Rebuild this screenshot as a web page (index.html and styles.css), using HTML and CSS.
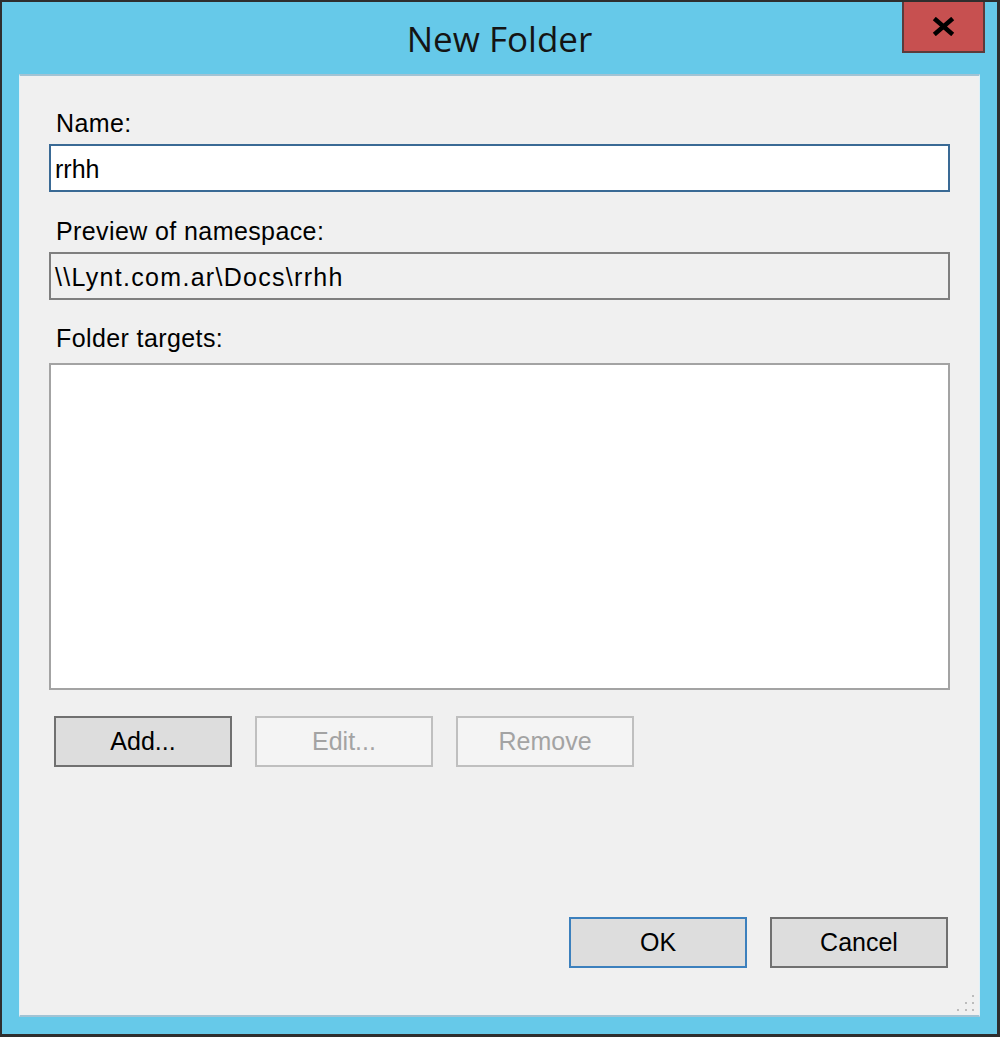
FILE: index.html
```html
<!DOCTYPE html>
<html lang="en">
<head>
    <meta charset="UTF-8">
    <title>New Folder</title>
    <link rel="stylesheet" href="styles.css">
</head>
<body>
    <div class="window">
        <div class="titlebar">
            <span class="title">New Folder</span>
            <button class="close-btn" aria-label="Close">
                <svg width="23" height="19" viewBox="0 0 23 19">
                    <path d="M4 3 L19 16 M19 3 L4 16" stroke="#000" stroke-width="4.5" stroke-linecap="square" fill="none"/>
                </svg>
            </button>
        </div>

        <div class="client">
            <label class="field-label" for="name-input">Name:</label>
            <input id="name-input" class="textbox" type="text" value="rrhh">

            <div class="field-label">Preview of namespace:</div>
            <div class="textbox readonly">\\Lynt.com.ar\Docs\rrhh</div>

            <div class="field-label targets-label">Folder targets:</div>
            <div class="listbox"></div>

            <div class="target-actions">
                <button class="btn btn-dark">Add...</button>
                <button class="btn" disabled>Edit...</button>
                <button class="btn" disabled>Remove</button>
            </div>

            <div class="dialog-actions">
                <button class="btn btn-default">OK</button>
                <button class="btn btn-dark">Cancel</button>
            </div>

            <!-- resize grip -->
            <svg class="grip" width="20" height="20" viewBox="0 0 20 20">
                <rect x="16" y="2" width="2" height="2" fill="#bcbcbc"/>
                <rect x="9" y="9" width="2" height="2" fill="#bcbcbc"/>
                <rect x="16" y="9" width="2" height="2" fill="#bcbcbc"/>
                <rect x="1" y="16" width="2" height="2" fill="#bcbcbc"/>
                <rect x="9" y="16" width="2" height="2" fill="#bcbcbc"/>
                <rect x="16" y="16" width="2" height="2" fill="#bcbcbc"/>
            </svg>
        </div>
    </div>
</body>
</html>
```

FILE: styles.css
```css
* {
    box-sizing: border-box;
}

html, body {
    margin: 0;
    padding: 0;
}

body {
    font-family: "Liberation Sans", Arial, sans-serif;
    background-color: #2e2e2e;
}

.window {
    position: relative;
    width: 1000px;
    height: 1037px;
    display: flex;
    flex-direction: column;
    background-color: #66c9e9;
    border-style: solid;
    border-color: #2e2e2e;
    border-width: 2px 3px 3px 2px;
}

.titlebar {
    flex: none;
    height: 72px;
    padding-top: 19px;
    text-align: center;
}

.title {
    font-family: "Open Sans", "Noto Sans", sans-serif;
    font-size: 35px;
    line-height: 35px;
    color: #141414;
}

.close-btn {
    position: absolute;
    top: 0;
    right: 12px;
    width: 83px;
    height: 51px;
    padding: 0;
    display: flex;
    align-items: center;
    justify-content: center;
    background-color: #c75050;
    border: 2px solid #5b3b3b;
    border-top: none;
}

.client {
    position: relative;
    flex: 1;
    display: flex;
    flex-direction: column;
    margin: 0 17px 17px 17px;
    padding: 32px 29px 47px 29px;
    background-color: #f0f0f0;
    border-style: solid;
    border-color: #a2c3d4;
    border-width: 2px 1px 2px 1px;
    border-left-color: #dff1f8;
    border-right-color: #dff1f8;
}

.field-label {
    display: block;
    font-size: 25px;
    line-height: 30px;
    letter-spacing: 0.4px;
    padding-left: 7px;
    margin-bottom: 6px;
    color: #000;
}

.targets-label {
    margin-bottom: 10px;
}

.textbox {
    width: 100%;
    height: 48px;
    margin: 0 0 24px 0;
    padding: 2px 4px 0 4px;
    font-family: "Liberation Sans", Arial, sans-serif;
    font-size: 25px;
    line-height: 42px;
    color: #000;
    background-color: #fff;
    border: 2px solid #3a6a95;
    outline: none;
}

.readonly {
    background-color: #f0f0f0;
    border-color: #7f7f7f;
    letter-spacing: 1.3px;
    margin-bottom: 23px;
}

.listbox {
    height: 327px;
    background-color: #fff;
    border: 2px solid #a3a3a3;
}

.target-actions {
    display: flex;
    gap: 23px;
    margin-top: 26px;
    padding-left: 5px;
}

.dialog-actions {
    display: flex;
    justify-content: flex-end;
    gap: 23px;
    margin-top: auto;
    padding-right: 2px;
}

.btn {
    width: 178px;
    height: 51px;
    padding: 0;
    font-family: "Liberation Sans", Arial, sans-serif;
    font-size: 25px;
    color: #a3a3a3;
    background-color: #f4f4f4;
    border: 2px solid #bfbfbf;
}

.btn-dark {
    color: #000;
    background-color: #dddddd;
    border-color: #707070;
}

.btn-default {
    color: #000;
    background-color: #dddddd;
    border-color: #3c80bd;
}

.grip {
    position: absolute;
    right: 3px;
    bottom: 2px;
}
```
